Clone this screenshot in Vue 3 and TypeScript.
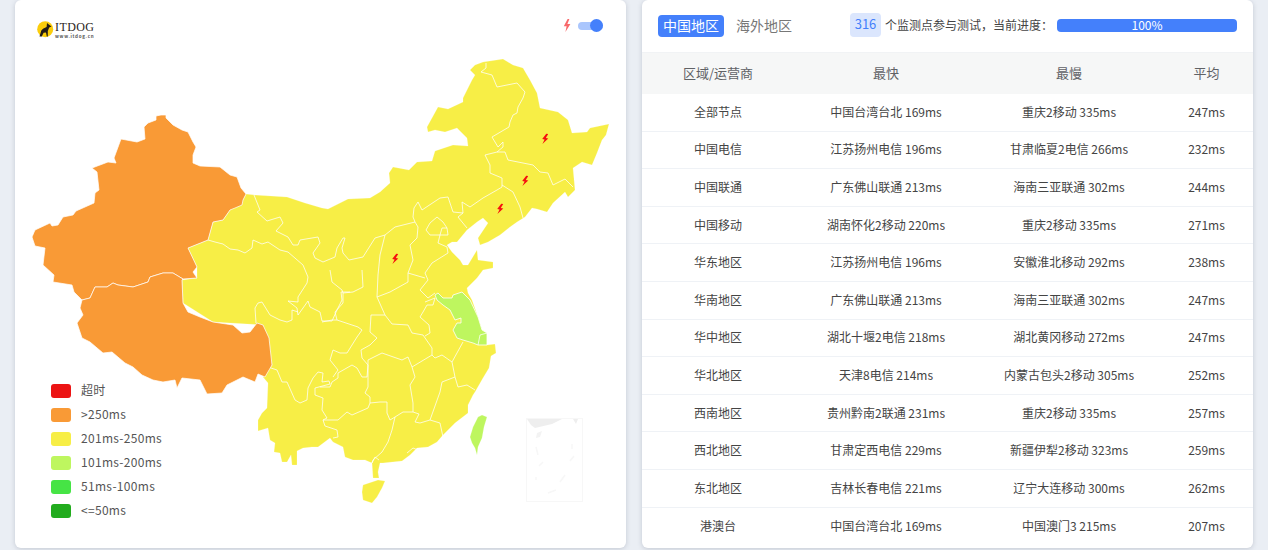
<script setup lang="ts">
const toPath = (s: string, close = true) => 'M' + s.trim().split(/\s+/).join('L') + (close ? 'Z' : '')

const china = toPath(`246,194 255,195 287,197 305,203 322,208 328,209 348,199 370,198 380,192 390,183 389,173 393,167 409,170 417,162 432,161 435,151 453,145 468,146 467,138 457,128 445,132 435,130 428,132 427,127 438,107 448,109 463,102 463,98 472,80 475,75 470,70 475,65 483,62 503,59 513,65 523,68 530,80 537,93 540,108 558,112 568,120 572,133 587,132 590,128 609,124 606,135 602,140 597,153 592,165 582,162 573,168 575,190 568,197 565,192 553,203 547,212 537,209 532,208 525,217 517,222 510,227 500,235 488,242 480,245 478,238 488,223 483,218 477,222 467,230 457,242 452,242 447,245 452,252 460,260 463,265 468,265 477,250 478,260 493,262 493,268 483,270 477,278 467,288 468,293 472,300 478,317 482,330 487,333 487,345 495,344 496,353 491,356 489,368 483,378 475,392 473,395 468,405 468,413 455,423 443,435 437,442 428,447 417,448 410,455 402,461 383,463 380,463 378,472 379,478 373,478 372,463 365,460 353,460 345,457 343,447 333,442 330,438 318,447 312,447 303,448 297,451 297,465 292,465 291,455 287,462 282,462 280,453 274,452 275,443 270,440 268,428 258,431 258,420 262,413 267,408 268,383 263,377 272,365 263,325 213,322 183,303 182,280 197,278 197,267 188,248 208,240 213,222 223,220 230,210 243,200`)
const hainan = toPath('363,485 378,480 385,481 382,488 377,497 372,503 363,500 362,492')
const xinjiang = toPath(`161,115 166,115 166,118 173,125 182,130 188,132 193,142 196,147 193,155 193,163 200,166 220,167 230,175 237,177 241,188 246,194 243,200 242,205 235,208 230,210 223,220 213,222 208,240 188,248 197,267 193,272 197,278 183,279 173,273 163,273 150,277 148,282 133,287 118,285 113,283 107,287 95,287 90,298 82,300 74,292 72,285 53,282 54,275 43,265 45,248 35,246 32,237 35,230 50,223 52,226 58,225 63,217 73,215 76,211 94,203 95,193 99,190 97,172 92,168 108,162 116,163 114,158 121,139 137,142 145,139 144,127 148,123 156,120 156,116`)
const tibet = toPath(`82,300 90,298 95,287 107,287 113,283 118,285 133,287 148,282 150,277 163,273 173,273 183,279 182,280 183,303 188,312 200,317 213,322 233,325 242,333 250,332 257,323 263,325 269,338 272,365 265,377 258,374 255,382 243,377 227,385 222,393 207,394 200,380 182,378 177,388 175,380 163,382 153,380 142,375 133,367 125,363 112,352 103,353 90,342 82,338 77,323 83,315 80,308`)
const jiangsu = toPath('435,295 438,293 443,298 452,298 453,295 462,292 470,300 478,317 482,330 487,333 487,345 478,345 473,343 463,340 457,338 453,330 457,323 461,323 461,318 455,320 450,310 443,305 437,300')
const taiwan = toPath('482,415 487,417 484,427 482,438 478,447 477,455 475,448 472,443 470,437 473,427 478,417')

const lines = [
  '254,195 260,210 257,212 267,221 280,217 283,223 276,231 288,237 293,245 298,245 300,240 318,237 320,243 313,253 315,258 323,262 335,257 337,248 343,238 345,238 342,248 343,253 349,260 363,257 375,238 385,235 395,227 415,222 413,217 414,208 418,202 422,210 440,198 448,197 453,212 463,213 462,202 470,207 483,198 497,190 502,187 502,178 490,173 490,165 485,155 497,152 503,147 503,142 498,147 492,137 509,127 510,122 513,115 517,113 518,107 523,98 525,92 517,83 497,87 492,75 481,72 486,68 486,63',
  '497,152 505,152 508,160 523,163 533,165 540,172 548,173 553,185 565,179 573,187',
  '502,185 513,192 520,207 523,218',
  '463,213 458,217 467,228',
  '208,240 215,242 223,244 230,249 238,250 245,253 252,248 253,240 262,244 268,242 280,250 288,252 303,265 308,277 307,283 298,297 298,302 288,301 297,308 298,315 303,308 308,301 310,307 320,312 322,321 332,321 337,310 342,300 341,292 350,292',
  '256,323 255,308 258,303 262,302 270,315 280,320 287,322 292,320 292,310 298,312',
  '385,235 380,255 378,275 377,297 385,315 392,324 408,325 412,333 423,335 432,348 432,355 435,358 442,355 452,362 455,377 458,387 467,385 475,390',
  '415,222 418,227 417,238 410,245 413,260 408,273 408,282 390,292 377,297',
  '437,217 443,222 447,228 442,228 440,235 430,235 426,230 430,223 437,217',
  '447,228 448,235 440,235 438,243 447,247 448,253 432,263 425,273 428,280 420,290 428,298 435,293',
  '408,273 425,278',
  '463,342 452,362',
  '425,302 435,298 433,305 427,305 423,312 420,317 429,325 430,333 425,336',
  '455,377 442,382 440,392 430,420 440,423 443,437',
  '430,420 420,423 415,422 419,414 413,412 403,412 395,417 392,430 388,442 382,452 373,460 372,463',
  '368,360 382,353 402,360 408,357 412,367 415,377 410,385 413,403 413,412',
  '412,367 432,355',
  '368,360 368,387 365,393 370,397 370,403 380,402 387,402 387,413 390,420 395,417',
  '362,270 363,287 353,292 343,293 343,303 335,312 337,320 332,320 322,322',
  '337,320 358,327 362,330 357,337 352,345 347,353 340,353 333,350 330,360 338,370 333,377',
  '320,387 330,387 332,382 338,378 338,373 352,365 357,368 362,377 367,377 368,365 362,358 361,350 370,345 377,338 370,332 371,315 385,315',
  '268,367 277,370 282,382 287,382 295,400 300,403 307,400 308,388 313,378 318,372 323,373 322,382 329,381 330,384 315,388 315,395 323,398 322,410 327,418 323,420 325,426 337,430 338,437 333,438',
  '323,420 338,420 347,412 352,415 368,408 370,403',
  '407,453 413,448 418,450 412,455',
  '478,345 480,335 487,333',
  '379,460 375,457 372,463',
  '330,270 332,282 342,290 343,293',
]
const provinceLines = lines.map((l) => toPath(l, false))

const bolts = [
  [545, 139],
  [525, 181],
  [500, 209],
  [395, 259],
]

const legend = [
  { label: '超时', color: '#ec1414' },
  { label: '>250ms', color: '#f99a36' },
  { label: '201ms-250ms', color: '#f7ee46' },
  { label: '101ms-200ms', color: '#bef65f' },
  { label: '51ms-100ms', color: '#46e445' },
  { label: '<=50ms', color: '#22ac1e' },
]

const rows = [
  ['全部节点', '中国台湾台北 169ms', '重庆2移动 335ms', '247ms'],
  ['中国电信', '江苏扬州电信 196ms', '甘肃临夏2电信 266ms', '232ms'],
  ['中国联通', '广东佛山联通 213ms', '海南三亚联通 302ms', '244ms'],
  ['中国移动', '湖南怀化2移动 220ms', '重庆2移动 335ms', '271ms'],
  ['华东地区', '江苏扬州电信 196ms', '安徽淮北移动 292ms', '238ms'],
  ['华南地区', '广东佛山联通 213ms', '海南三亚联通 302ms', '247ms'],
  ['华中地区', '湖北十堰2电信 218ms', '湖北黄冈移动 272ms', '247ms'],
  ['华北地区', '天津8电信 214ms', '内蒙古包头2移动 305ms', '252ms'],
  ['西南地区', '贵州黔南2联通 231ms', '重庆2移动 335ms', '257ms'],
  ['西北地区', '甘肃定西电信 229ms', '新疆伊犁2移动 323ms', '259ms'],
  ['东北地区', '吉林长春电信 221ms', '辽宁大连移动 300ms', '262ms'],
  ['港澳台', '中国台湾台北 169ms', '中国澳门3 215ms', '207ms'],
]
</script>

<template>
  <div class="page">
    <section class="card map-card">
      <svg class="map" viewBox="15 0 611 548" width="611" height="548" aria-hidden="true">
        <g stroke="#fff" stroke-width="1" stroke-linejoin="round">
          <path :d="china" fill="#f7ee46" stroke-opacity="0.2" />
          <path :d="hainan" fill="#f7ee46" stroke-opacity="0.2" />
          <path :d="taiwan" fill="#bef65f" stroke-opacity="0.2" />
          <path :d="jiangsu" fill="#bef65f" stroke-opacity="0.8" />
          <path v-for="(d, i) in provinceLines" :key="i" :d="d" fill="none" stroke-opacity="0.75" />
          <path :d="xinjiang" fill="#f99a36" stroke-opacity="0.7" />
          <path :d="tibet" fill="#f99a36" stroke-opacity="0.7" />
        </g>
        <g class="inset">
          <rect x="526.5" y="418.5" width="56" height="83" fill="none" stroke="#f7f7f7" />
          <path d="M527 419H562L552 424 535 428 531 425Z" fill="#eeeeee" />
          <path d="M573 419H578L576 424Z" fill="#eeeeee" />
          <path d="M537 433L542 431 540 437 536 438Z" fill="#f3f3f3" />
          <path d="M572 444V449M570 461L574 456M560 482L565 475M536 477V480M556 490L548 493M539 466L543 462M536 447L538 455" fill="none" stroke="#f7f7f7" stroke-width="1.5" />
        </g>
        <g v-for="b in bolts" :key="b[0]" :transform="`translate(${b[0] - 3.5} ${b[1] - 5.5}) rotate(12 3.5 5.5)`">
          <path d="M3.6 0L0.8 6.2H3.2L2 11 6.6 4.4H4.1L5.6 0Z" fill="#f5100f" />
        </g>
      </svg>

      <div class="map-top">
        <div class="logo">
          <svg width="17" height="17" viewBox="37 21 17 17" aria-hidden="true">
            <circle cx="45.2" cy="29.2" r="8" fill="#fbcd0b" />
            <path d="M39.5 36.5L41.3 30.5 43 28.8 46.6 27 47 23 48.8 24.6 51.5 26.6 49.2 27.6 47.8 31 47.8 36.5H46.8L46 32.4 43.6 32.8 41.8 36.5Z" fill="#231c14" />
          </svg>
          <div class="logo-text">
            <span class="logo-name">ITDOG</span>
            <span class="logo-url">www.itdog.cn</span>
          </div>
        </div>
        <div class="switch-wrap">
          <svg width="8" height="13" viewBox="0 0 8 13" aria-hidden="true">
            <path d="M4.6 0L0.8 7.2H3.6L2.4 13 7.4 5H4.4L6.4 0Z" fill="#f8696b" />
          </svg>
          <span class="switch"><span class="knob"></span></span>
        </div>
      </div>

      <ul class="legend">
        <li v-for="item in legend" :key="item.label">
          <span class="swatch" :style="{ background: item.color }"></span>
          <span class="legend-label">{{ item.label }}</span>
        </li>
      </ul>
    </section>

    <section class="card table-card">
      <header class="bar">
        <div class="tabs">
          <span class="tab active">中国地区</span>
          <span class="tab">海外地区</span>
        </div>
        <div class="status">
          <span class="count">316</span>
          <span class="desc">个监测点参与测试，当前进度：</span>
          <span class="progress">100%</span>
        </div>
      </header>
      <div class="grid head">
        <div>区域/运营商</div>
        <div>最快</div>
        <div>最慢</div>
        <div>平均</div>
      </div>
      <div v-for="row in rows" :key="row[0]" class="grid row">
        <div v-for="cell in row" :key="cell">{{ cell }}</div>
      </div>
    </section>
  </div>
</template>

<style>
html,
body {
  margin: 0;
  background: #eaeef4;
  overflow: hidden;
}
</style>

<style scoped>
.page {
  display: flex;
  gap: 16px;
  padding: 0 15px;
  height: 550px;
  box-sizing: border-box;
  font-family: "Noto Sans CJK SC", sans-serif;
  color: #444;
}
.card {
  position: relative;
  width: 611px;
  height: 548px;
  flex: none;
  background: #fff;
  border-radius: 6px;
  box-shadow: 0 1px 5px rgba(60, 70, 90, 0.22);
  overflow: hidden;
}
.map {
  position: absolute;
  inset: 0;
  display: block;
}
.map-top {
  position: relative;
  display: flex;
  justify-content: space-between;
  align-items: flex-start;
  padding: 21px 23px 0 22px;
}
.logo {
  display: flex;
  gap: 1px;
}
.logo-text {
  display: flex;
  flex-direction: column;
}
.logo-name {
  font-family: "Liberation Serif", serif;
  font-size: 12px;
  line-height: 12px;
  letter-spacing: 0.4px;
  color: #2a2320;
}
.logo-url {
  font-size: 4.5px;
  line-height: 6px;
  font-weight: 700;
  letter-spacing: 0.7px;
  color: #555;
}
.switch-wrap {
  display: flex;
  align-items: center;
  gap: 7px;
  margin-top: -2px;
}
.switch {
  position: relative;
  display: block;
  width: 25px;
  height: 8px;
  border-radius: 4px;
  background: #aac6fd;
}
.knob {
  position: absolute;
  right: 0;
  top: -2.5px;
  width: 13px;
  height: 13px;
  border-radius: 50%;
  background: #4480fb;
}
.legend {
  position: absolute;
  left: 36px;
  top: 379px;
  margin: 0;
  padding: 0;
  list-style: none;
  font-size: 12px;
  letter-spacing: 0.3px;
  color: #555;
}
.legend li {
  display: flex;
  align-items: center;
  gap: 10px;
  height: 24px;
}
.legend-label {
  padding-bottom: 4px;
}
.swatch {
  width: 20px;
  height: 14px;
  border-radius: 3px;
}
.bar {
  display: flex;
  justify-content: space-between;
  align-items: flex-start;
  height: 53px;
  padding: 13px 16px 0;
  box-sizing: border-box;
  border-bottom: 1px solid #f1f3f5;
}
.tabs {
  display: flex;
  gap: 7px;
  margin-top: 2px;
  font-size: 14px;
  color: #777;
}
.tab {
  padding: 0 5px;
  height: 22px;
  line-height: 21px;
  border-radius: 4px;
}
.tab.active {
  background: #4480fb;
  color: #fff;
}
.status {
  display: flex;
  align-items: center;
  font-size: 12px;
}
.count {
  width: 31px;
  height: 24px;
  line-height: 22px;
  text-align: center;
  margin-right: 4px;
  border-radius: 4px;
  background: #dbe6fd;
  color: #4480fb;
  font-size: 13px;
}
.desc {
  width: 172px;
  padding-bottom: 2px;
}
.progress {
  width: 180px;
  height: 13px;
  margin-top: 1px;
  line-height: 11px;
  text-align: center;
  color: #fff;
  background: #4480fb;
  border-radius: 4px;
}
.grid {
  display: grid;
  grid-template-columns: 152px 184px 182px 93px;
  text-align: center;
  align-items: center;
}
.head {
  height: 41px;
  box-sizing: border-box;
  padding-bottom: 3px;
  font-size: 13px;
  color: #606266;
  background: #f6f7f7;
}
.row {
  height: 37.6px;
  box-sizing: border-box;
  padding-bottom: 2px;
  border-bottom: 1px solid #eff2f6;
  font-size: 12px;
}
.row:last-child {
  border-bottom: none;
}
</style>
